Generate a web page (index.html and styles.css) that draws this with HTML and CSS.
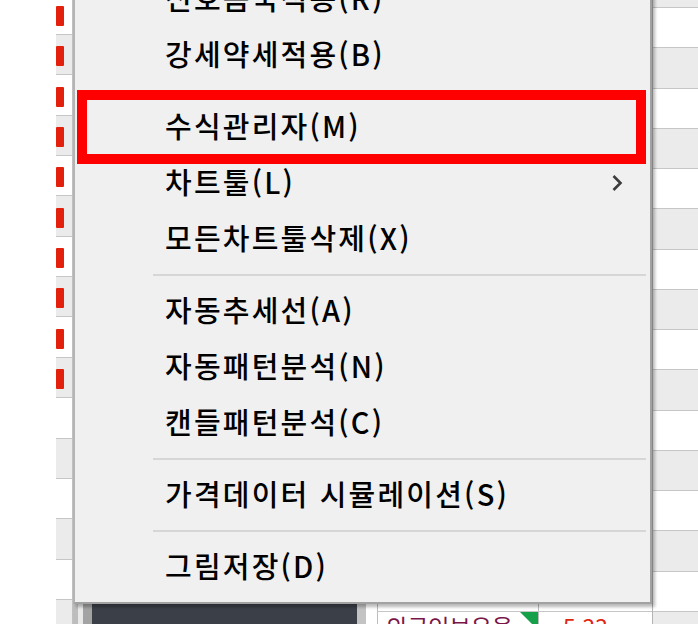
FILE: index.html
```html
<!DOCTYPE html>
<html lang="ko">
<head>
    <meta charset="UTF-8">
    <meta name="viewport" content="width=device-width, initial-scale=1.0">
    <title>차트 메뉴</title>
    <link rel="stylesheet" href="styles.css">
</head>
<body>
    <div class="screen">
        <div class="blank"></div>

        <div class="list-col">
            <div class="cell"><span class="flag"></span></div>
            <div class="cell alt"><span class="flag"></span></div>
            <div class="cell"><span class="flag"></span></div>
            <div class="cell alt"><span class="flag"></span></div>
            <div class="cell"><span class="flag"></span></div>
            <div class="cell alt"><span class="flag"></span></div>
            <div class="cell"><span class="flag"></span></div>
            <div class="cell alt"><span class="flag"></span></div>
            <div class="cell"><span class="flag"></span></div>
            <div class="cell alt"><span class="flag"></span></div>
            <div class="cell"></div>
            <div class="cell alt"></div>
            <div class="cell"></div>
            <div class="cell alt"></div>
            <div class="cell"></div>
            <div class="cell alt"></div>
        </div>

        <div class="center">
            <div class="bottom-strip">
                <div class="chart-frame">
                    <div class="frame-edge"></div>
                    <div class="frame-light"></div>
                    <div class="frame-mid"></div>
                    <div class="chart-dark"></div>
                    <div class="frame-gray"></div>
                    <div class="frame-white"></div>
                </div>
                <div class="grid-table">
                    <div class="grid-row">
                        <div class="grid-cell name">기관순매수비</div>
                        <div class="grid-cell value">0.61</div>
                    </div>
                    <div class="grid-row">
                        <div class="grid-cell name">외국인보유율<span class="corner"></span></div>
                        <div class="grid-cell value">5.33</div>
                    </div>
                </div>
            </div>
        </div>

        <div class="side-col">
            <div class="side-cell alt"></div>
            <div class="side-cell"></div>
            <div class="side-cell alt"></div>
            <div class="side-cell"></div>
            <div class="side-cell alt"></div>
            <div class="side-cell"></div>
            <div class="side-cell alt"></div>
            <div class="side-cell"></div>
            <div class="side-cell alt"></div>
            <div class="side-cell"></div>
            <div class="side-cell alt"></div>
            <div class="side-cell"></div>
            <div class="side-cell alt"></div>
            <div class="side-cell"></div>
            <div class="side-cell alt"></div>
            <div class="side-cell"></div>
            <div class="side-cell alt"></div>
        </div>
    </div>

    <!-- popup menu over the chart -->
    <div class="context-menu">
        <div class="menu-item"><span>신호음국적용(R)</span></div>
        <div class="menu-item"><span>강세약세적용(B)</span></div>
        <div class="menu-sep"></div>
        <div class="menu-item"><span>수식관리자(M)</span></div>
        <div class="menu-item"><span>차트툴(L)</span><svg class="submenu-arrow" width="12" height="20" viewBox="0 0 12 20"><path d="M2.5 3 L9.5 10 L2.5 17" fill="none" stroke="#3c3c3c" stroke-width="2.6"/></svg></div>
        <div class="menu-item"><span>모든차트툴삭제(X)</span></div>
        <div class="menu-sep"></div>
        <div class="menu-item"><span>자동추세선(A)</span></div>
        <div class="menu-item"><span>자동패턴분석(N)</span></div>
        <div class="menu-item"><span>캔들패턴분석(C)</span></div>
        <div class="menu-sep"></div>
        <div class="menu-item"><span>가격데이터 시뮬레이션(S)</span></div>
        <div class="menu-sep"></div>
        <div class="menu-item"><span>그림저장(D)</span></div>
    </div>

    <div class="highlight"></div>
</body>
</html>
```

FILE: styles.css
```css
:root {
    --row-gray: #ebebeb;
    --grid-line: #c6c6c6;
    --menu-bg: #f0f0f0;
    --flag-red: #e3200c;
}

body {
    margin: 0;
    padding: 0;
    width: 698px;
    height: 624px;
    overflow: hidden;
    position: relative;
    background: #ffffff;
    font-family: "Noto Sans CJK KR", "Noto Sans", sans-serif;
}

.screen {
    display: flex;
    height: 624px;
    overflow: hidden;
}

.blank {
    width: 56px;
    flex-shrink: 0;
}

/* left list column */
.list-col {
    width: 17px;
    flex-shrink: 0;
    border-right: 1px solid #c0c0c0;
    box-sizing: border-box;
    margin-top: -5.4px;
}

.cell {
    height: 40.36px;
    box-sizing: border-box;
    border-bottom: 1px solid var(--grid-line);
    background: #ffffff;
    display: flex;
    align-items: center;
}

.cell.alt {
    background: var(--row-gray);
}

.flag {
    width: 8px;
    height: 20px;
    margin-top: 3px;
    background: var(--flag-red);
    border-radius: 1px;
}

/* chart area, mostly under the menu */
.center {
    width: 579px;
    flex-shrink: 0;
    display: flex;
    flex-direction: column;
    justify-content: flex-end;
}

.bottom-strip {
    display: flex;
    height: 52px;
}

.chart-frame {
    display: flex;
    width: 304px;
}

.frame-edge { width: 5px; background: #bdbdbd; }
.frame-light { width: 5px; background: #e9e9e9; }
.frame-mid { width: 9px; background: #a3a3a3; }
.chart-dark { width: 265px; background: #3b3f47; }
.frame-gray { width: 9px; background: #c3c3c3; }
.frame-white { width: 11px; background: #ffffff; }

.grid-table {
    width: 275px;
    display: flex;
    flex-direction: column;
}

.grid-row {
    display: flex;
    height: 40px;
    box-sizing: border-box;
    border-bottom: 1px solid var(--grid-line);
}

.grid-row:last-child {
    height: 12px;
    border-bottom: none;
}

.grid-cell {
    position: relative;
    box-sizing: border-box;
    border-left: 1px solid #bcbcbc;
    font-size: 23px;
    line-height: 39px;
    white-space: nowrap;
    overflow: hidden;
}

.grid-row:last-child .grid-cell {
    line-height: 24px;
    padding-top: 2px;
}

.grid-cell.name {
    width: 161px;
    padding-left: 8px;
    color: #7a1548;
}

.grid-cell.value {
    width: 114px;
    padding-left: 24px;
    color: #e2250f;
}

.corner {
    position: absolute;
    top: 0;
    right: 0;
    width: 18px;
    height: 18px;
    background: #17a04a;
    clip-path: polygon(0 0, 100% 0, 100% 100%);
}

/* right list column */
.side-col {
    width: 46px;
    flex-shrink: 0;
    border-left: 1px solid #b4b4b4;
    box-sizing: border-box;
    margin-top: -32.3px;
}

.side-cell {
    height: 40.27px;
    box-sizing: border-box;
    border-bottom: 1px solid var(--grid-line);
    background: #ffffff;
}

.side-cell.alt {
    background: var(--row-gray);
}

/* context menu */
.context-menu {
    position: absolute;
    left: 73px;
    top: -40px;
    width: 579px;
    box-sizing: border-box;
    background: var(--menu-bg);
    border-left: 2px solid #b4b4b4;
    border-right: 2px solid #a2a2a2;
    border-top: 2px solid #b4b4b4;
    border-bottom: 2px solid #a2a2a2;
    padding: 9px 0 7px;
    box-shadow: 3px 3px 3px rgba(0, 0, 0, 0.28);
}

.menu-item {
    display: flex;
    align-items: center;
    height: 56px;
    padding-left: 90px;
    padding-right: 27px;
    padding-bottom: 5px;
    box-sizing: border-box;
    font-size: 29px;
    font-weight: 500;
    letter-spacing: 2.2px;
    color: #000000;
    white-space: nowrap;
}

.submenu-arrow {
    margin-left: auto;
    margin-top: 5px;
}

.menu-sep {
    height: 16px;
    margin: 0 4px 0 78px;
    display: flex;
    align-items: center;
}

.menu-sep::after {
    content: "";
    flex: 1;
    height: 2px;
    background: #d6d6d6;
}

/* red annotation box */
.highlight {
    position: absolute;
    left: 77px;
    top: 90px;
    width: 569px;
    height: 74px;
    box-sizing: border-box;
    border: 10px solid #ff0000;
}
```
